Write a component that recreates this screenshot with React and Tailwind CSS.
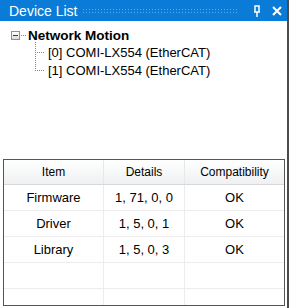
import React from "react";

const rows = [
  { item: "Firmware", details: "1, 71, 0, 0", compat: "OK" },
  { item: "Driver", details: "1, 5, 0, 1", compat: "OK" },
  { item: "Library", details: "1, 5, 0, 3", compat: "OK" },
  { item: "", details: "", compat: "" },
  { item: "", details: "", compat: "" },
];

function PinIcon() {
  return (
    <svg width="8" height="12" viewBox="0 0 8 12" fill="none">
      <path d="M2 1h4v6H2z M1 7h6 M4 7v5" stroke="white" strokeWidth="1.5" />
    </svg>
  );
}

function CloseIcon() {
  return (
    <svg width="10" height="10" viewBox="0 0 10 10">
      <path d="M1 1l8 8M9 1l-8 8" stroke="white" strokeWidth="2" />
    </svg>
  );
}

export default function App() {
  return (
    <div className="flex h-[308px] w-[289px] overflow-hidden bg-white font-['Liberation_Sans',sans-serif]">
      <div className="flex w-[287px] flex-col">
        {/* Title bar */}
        <div className="flex h-[21px] items-center bg-[#0a7bd6] pl-[9px] pr-[5px]">
          <span className="text-[14px] leading-none text-white">Device List</span>
          <div className="ml-[5px] mr-[14px] h-[5px] flex-1 bg-[radial-gradient(circle,#5ea8e8_0.8px,transparent_1px)] bg-[length:3px_3px]" />
          <div className="flex items-center gap-[11px]">
            <PinIcon />
            <CloseIcon />
          </div>
        </div>

        {/* Tree */}
        <div className="relative h-[138px] text-black">
          <div className="flex h-[20px] items-center pt-[9px] pl-[11px]">
            <div className="flex h-[9px] w-[9px] items-center justify-center border border-[#919191] bg-gradient-to-b from-white to-[#dcdcdc]">
              <div className="h-px w-[5px] bg-[#1c3d8c]" />
            </div>
            <div className="ml-px w-[5px] border-t border-dotted border-[#888]" />
            <span className="ml-[2px] text-[13.5px] font-bold leading-none">Network Motion</span>
          </div>
          <div className="absolute left-[35px] top-[21px] h-[29px] border-l border-dotted border-[#888]" />
          <div className="ml-[35px] mt-[2px] flex flex-col">
            {["[0] COMI-LX554 (EtherCAT)", "[1] COMI-LX554 (EtherCAT)"].map((t) => (
              <div key={t} className="flex h-[18px] items-center">
                <div className="w-[9px] border-t border-dotted border-[#888]" />
                <span className="ml-[4px] text-[13px] leading-none">{t}</span>
              </div>
            ))}
          </div>
        </div>

        {/* Table */}
        <div className="ml-[3px] mr-[2px] border border-[#555] text-[13px] text-black">
          <div className="grid h-[25px] grid-cols-[100px_81px_1fr] border-b border-[#d8d8d8] bg-gradient-to-b from-white to-[#eef0f2] text-[12px]">
            <div className="flex items-center justify-center border-r border-[#e8e8e8]">Item</div>
            <div className="flex items-center justify-center border-r border-[#e8e8e8]">Details</div>
            <div className="flex items-center justify-center">Compatibility</div>
          </div>
          {rows.map((r, i) => (
            <div
              key={i}
              className={`grid grid-cols-[100px_81px_1fr] ${i < rows.length - 1 ? "h-[26px] border-b border-[#ececec]" : "h-[16px]"}`}
            >
              <div className="flex items-center justify-center border-r border-[#ececec]">{r.item}</div>
              <div className="flex items-center justify-center border-r border-[#ececec]">{r.details}</div>
              <div className="flex items-center justify-center">{r.compat}</div>
            </div>
          ))}
        </div>
      </div>
      <div className="w-[2px] bg-[#4a4a4a]" />
    </div>
  );
}
